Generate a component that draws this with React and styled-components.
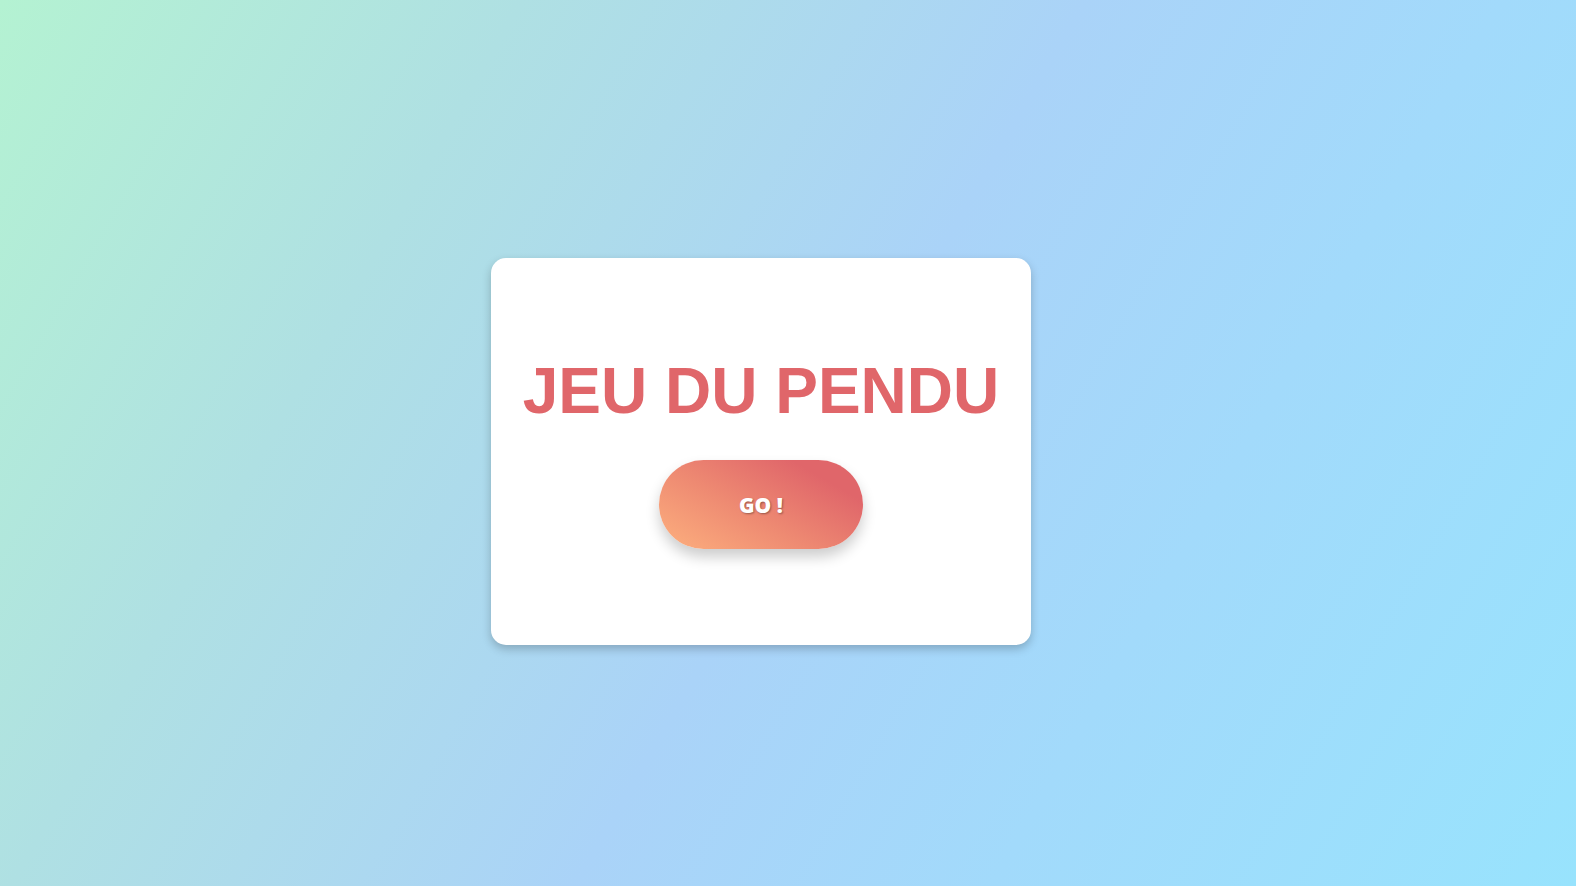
import React from "react";
import styled, { createGlobalStyle } from "styled-components";

const GlobalStyle = createGlobalStyle`
  html, body {
    margin: 0;
    padding: 0;
  }
  body {
    font-family: "Liberation Sans", Arial, sans-serif;
    background: linear-gradient(120deg, #b4f2d2 0%, #afe0e3 25%, #aad3f8 52%, #a2dafb 72%, #98e3fd 100%);
    min-height: 100vh;
  }
`;

const Page = styled.div`
  min-height: 100vh;
  box-sizing: border-box;
  display: flex;
  align-items: center;
  justify-content: center;
  padding: 17px 54px 0 0;
`;

const Card = styled.div`
  width: 540px;
  height: 387px;
  background: #fff;
  border-radius: 15px;
  box-shadow: 0 4px 10px rgba(0, 0, 0, 0.22);
  display: flex;
  flex-direction: column;
  align-items: center;
  justify-content: center;
  gap: 32px;
`;

const Title = styled.h1`
  margin: 0;
  font-family: "Liberation Sans", Arial, sans-serif;
  font-size: 64px;
  font-weight: 700;
  color: #e0666a;
  text-align: center;
`;

const GoButton = styled.button`
  width: 204px;
  height: 89px;
  border: none;
  border-radius: 45px;
  background: linear-gradient(30deg, #fdb07e 0%, #ee8a72 42%, #e0666a 80%);
  box-shadow: 0 8px 14px rgba(0, 0, 0, 0.2);
  color: #fff;
  font-family: "Open Sans", "DejaVu Sans", sans-serif;
  font-weight: 800;
  font-size: 21px;
  text-shadow: 1px 1px 2px rgba(0, 0, 0, 0.35);
  cursor: pointer;
`;

function App() {
  return (
    <>
      <GlobalStyle />
      <Page>
        <Card>
          <Title>JEU DU PENDU</Title>
          <GoButton>GO !</GoButton>
        </Card>
      </Page>
    </>
  );
}

export default App;
